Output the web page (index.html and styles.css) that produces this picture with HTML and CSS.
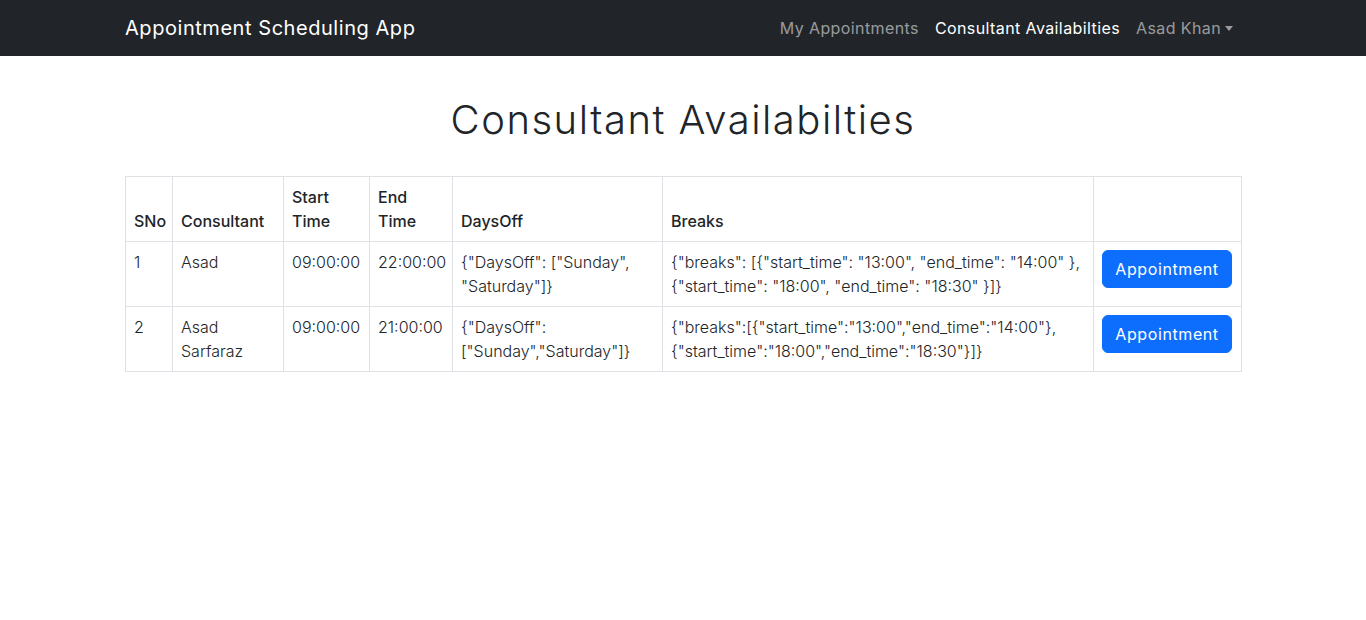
FILE: index.html
```html
<!DOCTYPE html>
<html lang="en">
<head>
<meta charset="utf-8">
<title>Appointment Scheduling App</title>
<link rel="stylesheet" href="styles.css">
</head>
<body>
<nav class="navbar">
  <div class="container nav-inner">
    <a class="brand" href="#">Appointment Scheduling App</a>
    <ul class="nav-links">
      <li><a class="nav-link" href="#">My Appointments</a></li>
      <li><a class="nav-link active" href="#">Consultant Availabilties</a></li>
      <li><a class="nav-link dropdown" href="#">Asad Khan<span class="caret"></span></a></li>
    </ul>
  </div>
</nav>
<main class="container">
  <h1 class="title">Consultant Availabilties</h1>
  <table class="table">
    <colgroup>
      <col class="c-sno"><col class="c-cons"><col class="c-start"><col class="c-end"><col class="c-days"><col class="c-breaks"><col class="c-act">
    </colgroup>
    <thead>
      <tr>
        <th>SNo</th>
        <th>Consultant</th>
        <th>Start Time</th>
        <th>End Time</th>
        <th>DaysOff</th>
        <th>Breaks</th>
        <th></th>
      </tr>
    </thead>
    <tbody>
      <tr>
        <td>1</td>
        <td>Asad</td>
        <td>09:00:00</td>
        <td>22:00:00</td>
        <td>{"DaysOff": ["Sunday", "Saturday"]}</td>
        <td>{"breaks": [{"start_time": "13:00", "end_time": "14:00" }, {"start_time": "18:00", "end_time": "18:30" }]}</td>
        <td><button class="btn">Appointment</button></td>
      </tr>
      <tr>
        <td>2</td>
        <td>Asad Sarfaraz</td>
        <td>09:00:00</td>
        <td>21:00:00</td>
        <td>{"DaysOff": ["Sunday","Saturday"]}</td>
        <td>{"breaks":[{"start_time":"13:00","end_time":"14:00"},{"start_time":"18:00","end_time":"18:30"}]}</td>
        <td><button class="btn">Appointment</button></td>
      </tr>
    </tbody>
  </table>
</main>
</body>
</html>
```
FILE: styles.css
```css
* { box-sizing: border-box; }
html, body { margin: 0; padding: 0; }
body {
  font-family: "Inter", "DejaVu Sans", sans-serif;
  font-weight: 300;
  font-size: 16px;
  line-height: 1.5;
  color: #212529;
  background: #fff;
}
a { text-decoration: none; }

.container {
  width: 1140px;
  margin: 0 auto;
  padding: 0 12px;
}

.navbar {
  background: #212529;
  padding: 8px 0;
}
.nav-inner {
  display: flex;
  align-items: center;
  justify-content: space-between;
}
.brand {
  color: #fff;
  font-size: 20px;
  font-weight: 400;
  line-height: 30px;
  padding: 5px 0;
  letter-spacing: 0.55px;
}
.nav-links {
  list-style: none;
  margin: 0;
  padding: 0;
  display: flex;
}
.nav-link {
  display: block;
  padding: 8px 8px;
  color: rgba(255,255,255,.55);
  font-weight: 400;
  font-size: 16px;
  letter-spacing: 0.4px;
}
.nav-link.active { color: #fff; }
.caret {
  display: inline-block;
  margin-left: 4px;
  vertical-align: 3px;
  border-top: 5px solid rgba(255,255,255,.55);
  border-left: 4px solid transparent;
  border-right: 4px solid transparent;
}

.title {
  text-align: center;
  font-size: 40px;
  font-weight: 300;
  line-height: 48px;
  margin: 40px 0 32px;
  letter-spacing: 1.5px;
}

.table {
  width: 100%;
  border-collapse: collapse;
  table-layout: fixed;
}
.c-sno { width: 47px; }
.c-cons { width: 111px; }
.c-start { width: 86px; }
.c-end { width: 83px; }
.c-days { width: 210px; }
.c-breaks { width: 431px; }
.c-act { width: 148px; }
.table th, .table td {
  border: 1px solid #dee2e6;
  padding: 8px;
  text-align: left;
  vertical-align: top;
}
.table th {
  font-weight: 500;
  vertical-align: bottom;
}
.btn {
  font-family: inherit;
  font-size: 16px;
  font-weight: 400;
  line-height: 24px;
  letter-spacing: 0.6px;
  color: #fff;
  background: #0d6efd;
  border: 1px solid #0d6efd;
  border-radius: 6px;
  padding: 6px 8px;
  width: 130px;
  cursor: pointer;
}
```
